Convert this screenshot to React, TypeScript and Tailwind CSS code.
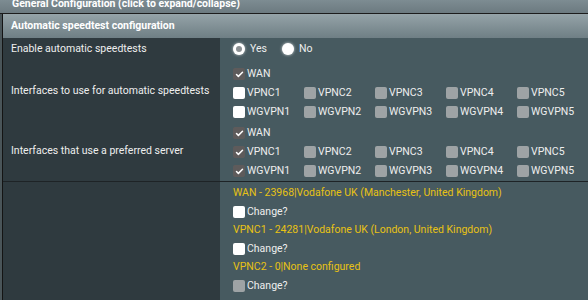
import { Check } from 'lucide-react';

type Box = 'on' | 'off' | 'dis';

function CheckBox({ state }: { state: Box }) {
  if (state === 'on') {
    return (
      <span className="w-[12px] h-[12px] rounded-[2px] bg-[#5e5b5b] flex items-center justify-center shrink-0">
        <Check className="w-[9px] h-[9px] text-white" strokeWidth={4} />
      </span>
    );
  }
  if (state === 'off') {
    return <span className="w-[12px] h-[12px] rounded-[2px] bg-white shrink-0" />;
  }
  return <span className="w-[12px] h-[12px] rounded-[2px] bg-[#9ea3a5] shrink-0" />;
}

function Opt({ state, label }: { state: Box; label: string }) {
  return (
    <div className="flex items-center gap-[2px]">
      <CheckBox state={state} />
      <span>{label}</span>
    </div>
  );
}

const names = ['VPNC', 'WGVPN'];

function IfaceGrid({ vpnc1, wg1 }: { vpnc1: Box; wg1: Box }) {
  return (
    <div className="flex flex-col gap-px">
      <div className="h-[18px] flex items-center">
        <Opt state="on" label="WAN" />
      </div>
      {names.map((n) => (
        <div key={n} className="h-[18px] grid grid-cols-[71px_71px_71px_71px_71px] items-center">
          {[1, 2, 3, 4, 5].map((i) => (
            <Opt key={i} state={i === 1 ? (n === 'VPNC' ? vpnc1 : wg1) : 'dis'} label={`${n}${i}`} />
          ))}
        </div>
      ))}
    </div>
  );
}

export default function App() {
  return (
    <div className="w-[588px] h-[300px] overflow-hidden bg-[#4a5559] text-[10.5px] text-[#eeeeee] font-['Roboto',sans-serif]">
      {/* collapsed section header, cut off at top */}
      <div className="h-[14px] bg-gradient-to-b from-[#7d8c92] to-[#6c7a80] border-b border-[#1c1c1c] overflow-hidden">
        <div className="-mt-[4px] pl-[12px] font-bold text-white leading-[15px]">General Configuration (click to expand/collapse)</div>
      </div>

      <div className="flex h-[286px]">
        <div className="w-[3px] bg-[#4a5559]" />
        <div className="w-[2px] bg-[#141414]" />
        <div className="flex-1 flex flex-col bg-[#2f3a3f]">
          <div className="h-[24px] shrink-0 flex items-center pl-[8px] font-bold text-white bg-gradient-to-b from-[#95a3a8] to-[#6f7f85]">
            Automatic speedtest configuration
          </div>

          <div className="flex h-[22px]">
            <div className="w-[217px] flex items-center pl-[8px]">Enable automatic speedtests</div>
            <div className="flex-1 bg-[#475a60] pl-[13px] flex items-center">
              <span className="w-[12px] h-[12px] rounded-full bg-white flex items-center justify-center shadow-[0_0_3px_rgba(255,255,255,0.7)]">
                <span className="w-[6px] h-[6px] rounded-full bg-[#8a8f92]" />
              </span>
              <span className="ml-[5px]">Yes</span>
              <span className="ml-[15px] w-[12px] h-[12px] rounded-full bg-white shadow-[0_0_3px_rgba(255,255,255,0.8)]" />
              <span className="ml-[5px]">No</span>
            </div>
          </div>

          <div className="flex">
            <div className="w-[217px] flex items-center pl-[8px]">Interfaces to use for automatic speedtests</div>
            <div className="flex-1 bg-[#475a60] pl-[13px] pt-[5px]">
              <IfaceGrid vpnc1="off" wg1="off" />
            </div>
          </div>

          <div className="flex border-b border-[#1e2326]">
            <div className="w-[217px] flex items-center pl-[8px]">Interfaces that use a preferred server</div>
            <div className="flex-1 bg-[#475a60] pl-[13px] pt-[3px] pb-px">
              <IfaceGrid vpnc1="on" wg1="on" />
            </div>
          </div>

          <div className="flex flex-1">
            <div className="w-[217px]" />
            <div className="flex-1 bg-[#475a60] pl-[13px] pt-[2px] flex flex-col">
              <div className="h-[18.5px] flex items-center text-[#e8c214]">WAN - 23968|Vodafone UK (Manchester, United Kingdom)</div>
              <div className="h-[18.5px] flex items-center"><Opt state="off" label="Change?" /></div>
              <div className="h-[18.5px] flex items-center text-[#e8c214]">VPNC1 - 24281|Vodafone UK (London, United Kingdom)</div>
              <div className="h-[18.5px] flex items-center"><Opt state="off" label="Change?" /></div>
              <div className="h-[18.5px] flex items-center text-[#e8c214]">VPNC2 - 0|None configured</div>
              <div className="h-[18.5px] flex items-center"><Opt state="dis" label="Change?" /></div>
            </div>
          </div>
        </div>
      </div>
    </div>
  );
}
